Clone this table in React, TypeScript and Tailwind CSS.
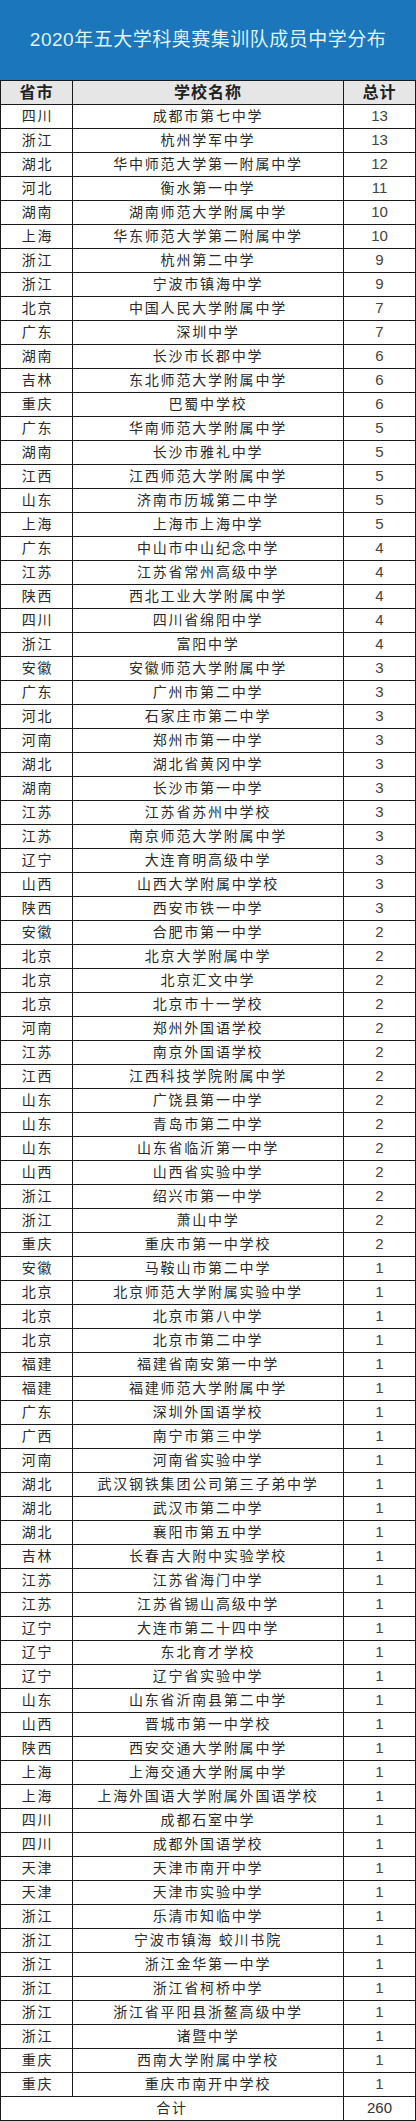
const rows: [string, string, number][] = [
  ["四川", "成都市第七中学", 13],
  ["浙江", "杭州学军中学", 13],
  ["湖北", "华中师范大学第一附属中学", 12],
  ["河北", "衡水第一中学", 11],
  ["湖南", "湖南师范大学附属中学", 10],
  ["上海", "华东师范大学第二附属中学", 10],
  ["浙江", "杭州第二中学", 9],
  ["浙江", "宁波市镇海中学", 9],
  ["北京", "中国人民大学附属中学", 7],
  ["广东", "深圳中学", 7],
  ["湖南", "长沙市长郡中学", 6],
  ["吉林", "东北师范大学附属中学", 6],
  ["重庆", "巴蜀中学校", 6],
  ["广东", "华南师范大学附属中学", 5],
  ["湖南", "长沙市雅礼中学", 5],
  ["江西", "江西师范大学附属中学", 5],
  ["山东", "济南市历城第二中学", 5],
  ["上海", "上海市上海中学", 5],
  ["广东", "中山市中山纪念中学", 4],
  ["江苏", "江苏省常州高级中学", 4],
  ["陕西", "西北工业大学附属中学", 4],
  ["四川", "四川省绵阳中学", 4],
  ["浙江", "富阳中学", 4],
  ["安徽", "安徽师范大学附属中学", 3],
  ["广东", "广州市第二中学", 3],
  ["河北", "石家庄市第二中学", 3],
  ["河南", "郑州市第一中学", 3],
  ["湖北", "湖北省黄冈中学", 3],
  ["湖南", "长沙市第一中学", 3],
  ["江苏", "江苏省苏州中学校", 3],
  ["江苏", "南京师范大学附属中学", 3],
  ["辽宁", "大连育明高级中学", 3],
  ["山西", "山西大学附属中学校", 3],
  ["陕西", "西安市铁一中学", 3],
  ["安徽", "合肥市第一中学", 2],
  ["北京", "北京大学附属中学", 2],
  ["北京", "北京汇文中学", 2],
  ["北京", "北京市十一学校", 2],
  ["河南", "郑州外国语学校", 2],
  ["江苏", "南京外国语学校", 2],
  ["江西", "江西科技学院附属中学", 2],
  ["山东", "广饶县第一中学", 2],
  ["山东", "青岛市第二中学", 2],
  ["山东", "山东省临沂第一中学", 2],
  ["山西", "山西省实验中学", 2],
  ["浙江", "绍兴市第一中学", 2],
  ["浙江", "萧山中学", 2],
  ["重庆", "重庆市第一中学校", 2],
  ["安徽", "马鞍山市第二中学", 1],
  ["北京", "北京师范大学附属实验中学", 1],
  ["北京", "北京市第八中学", 1],
  ["北京", "北京市第二中学", 1],
  ["福建", "福建省南安第一中学", 1],
  ["福建", "福建师范大学附属中学", 1],
  ["广东", "深圳外国语学校", 1],
  ["广西", "南宁市第三中学", 1],
  ["河南", "河南省实验中学", 1],
  ["湖北", "武汉钢铁集团公司第三子弟中学", 1],
  ["湖北", "武汉市第二中学", 1],
  ["湖北", "襄阳市第五中学", 1],
  ["吉林", "长春吉大附中实验学校", 1],
  ["江苏", "江苏省海门中学", 1],
  ["江苏", "江苏省锡山高级中学", 1],
  ["辽宁", "大连市第二十四中学", 1],
  ["辽宁", "东北育才学校", 1],
  ["辽宁", "辽宁省实验中学", 1],
  ["山东", "山东省沂南县第二中学", 1],
  ["山西", "晋城市第一中学校", 1],
  ["陕西", "西安交通大学附属中学", 1],
  ["上海", "上海交通大学附属中学", 1],
  ["上海", "上海外国语大学附属外国语学校", 1],
  ["四川", "成都石室中学", 1],
  ["四川", "成都外国语学校", 1],
  ["天津", "天津市南开中学", 1],
  ["天津", "天津市实验中学", 1],
  ["浙江", "乐清市知临中学", 1],
  ["浙江", "宁波市镇海 蛟川书院", 1],
  ["浙江", "浙江金华第一中学", 1],
  ["浙江", "浙江省柯桥中学", 1],
  ["浙江", "浙江省平阳县浙鳌高级中学", 1],
  ["浙江", "诸暨中学", 1],
  ["重庆", "西南大学附属中学校", 1],
  ["重庆", "重庆市南开中学校", 1],
];

export default function App() {
  return (
    <div className="w-[416px] bg-white font-['Liberation_Sans','Noto_Sans_CJK_SC',sans-serif]">
      {/* Title banner */}
      <div className="h-[80px] bg-[#1b76bc] flex items-center justify-center">
        <h1 className="text-[19px] text-[#dff3fb] tracking-[0.5px]">
          2020年五大学科奥赛集训队成员中学分布
        </h1>
      </div>

      <div className="border-l border-r border-[#1a1a1a]">
        {/* Header */}
        <div className="grid grid-cols-[72px_271px_1fr] h-[25px] border-t border-b border-[#1a1a1a] bg-[#e6e6e6] text-[16px] font-bold text-[#222] tracking-[1px]">
          <div className="flex items-center justify-center border-r border-[#1a1a1a]">省市</div>
          <div className="flex items-center justify-center border-r border-[#1a1a1a]">学校名称</div>
          <div className="flex items-center justify-center">总计</div>
        </div>

        {/* Rows */}
        {rows.map(([prov, school, count], i) => (
          <div
            key={i}
            className="grid grid-cols-[72px_271px_1fr] h-6 border-b border-[#1a1a1a] text-[14px] text-[#2a2a2a]"
          >
            <div className="flex items-center justify-center border-r border-[#1a1a1a] tracking-[1.8px] pl-[2px]">
              {prov}
            </div>
            <div className="flex items-center justify-center border-r border-[#1a1a1a] tracking-[1.8px] whitespace-pre">
              {school}
            </div>
            <div className="flex items-center justify-center text-[15px] text-[#444]">
              {count}
            </div>
          </div>
        ))}

        {/* Total */}
        <div className="grid grid-cols-[343px_1fr] h-6 border-b border-[#1a1a1a] text-[14px] text-[#2a2a2a]">
          <div className="flex items-center justify-center border-r border-[#1a1a1a] tracking-[1.8px]">合计</div>
          <div className="flex items-center justify-center text-[15px] text-[#333]">260</div>
        </div>
      </div>
    </div>
  );
}
